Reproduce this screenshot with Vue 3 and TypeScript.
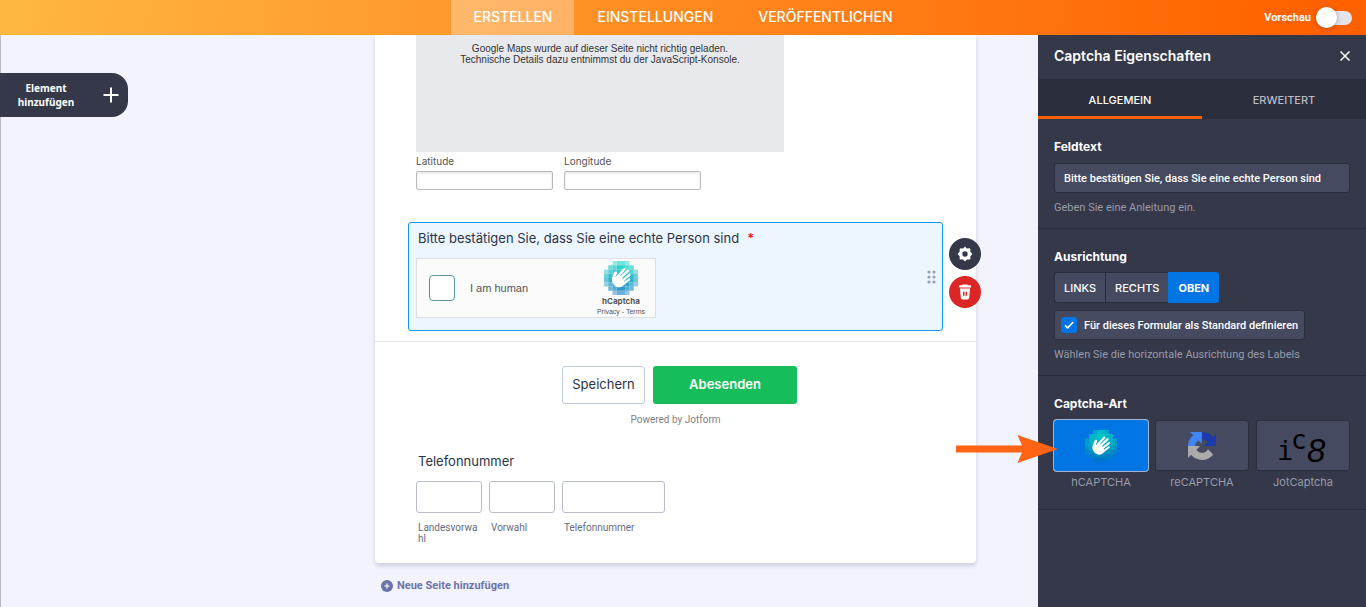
<script setup lang="ts">
import { ref } from 'vue'

const topTabs = ['ERSTELLEN', 'EINSTELLUNGEN', 'VERÖFFENTLICHEN']
const activeTop = ref('ERSTELLEN')
const panelTabs = ['ALLGEMEIN', 'ERWEITERT']
const activePanel = ref('ALLGEMEIN')
const alignments = ['LINKS', 'RECHTS', 'OBEN']
const alignment = ref('OBEN')
const captchaTypes = ['hCAPTCHA', 'reCAPTCHA', 'JotCaptcha']
const captchaType = ref('hCAPTCHA')
const fieldText = ref('Bitte bestätigen Sie, dass Sie eine echte Person sind')
const asDefault = ref(true)
const preview = ref(false)

interface Cell { x: number; y: number; fill: string; opacity: number }

const rowColors = ['#00d4bf', '#00c8bf', '#00bbbf', '#00aebf', '#00a0bf', '#0092bf', '#0083bf', '#0074bf']
const opacityRows = [
  [0, 0, 5, 7, 7, 5, 0, 0],
  [0, 7, 8, 10, 10, 8, 7, 0],
  [5, 8, 10, 10, 10, 10, 8, 5],
  [7, 10, 10, 10, 10, 10, 10, 7],
  [7, 10, 10, 10, 10, 10, 10, 7],
  [5, 8, 10, 10, 10, 10, 8, 5],
  [0, 7, 8, 10, 10, 8, 7, 0],
  [0, 0, 5, 7, 7, 5, 0, 0],
]
const cells: Cell[] = opacityRows.flatMap((row, r) =>
  row
    .map((o, c) => ({ x: c * 4, y: r * 4, fill: rowColors[r], opacity: o / 10 }))
    .filter((cell) => cell.opacity > 0),
)
const hand =
  'M10.86 14.41L11.98 11.91C12.39 11.27 12.33 10.49 11.89 10.04C11.83 9.98 11.76 9.93 11.69 9.89C11.54 9.8 11.37 9.74 11.19 9.72C11.01 9.71 10.83 9.73 10.66 9.79C10.27 9.94 9.94 10.22 9.74 10.57C9.74 10.57 8.21 14.13 7.64 15.74C7.07 17.34 7.3 20.28 9.49 22.48C11.81 24.8 15.17 25.32 17.32 23.72C17.41 23.68 17.5 23.62 17.58 23.56L24.19 18.06C24.51 17.79 24.98 17.25 24.56 16.63C24.14 16.03 23.36 16.44 23.04 16.64L19.23 19.4C19.08 19.52 18.87 19.5 18.75 19.35C18.65 19.23 18.63 18.9 18.79 18.77L24.62 13.83C25.12 13.38 25.19 12.71 24.78 12.26C24.38 11.82 23.75 11.83 23.24 12.29L18 16.38C17.79 16.55 17.49 16.5 17.34 16.29C17.24 16.17 17.2 15.98 17.31 15.86L23.25 10.1C23.71 9.67 23.74 8.94 23.31 8.45C22.86 8.02 22.17 8.03 21.69 8.47L15.63 14.16C15.48 14.3 15.2 14.16 15.16 13.99C15.15 13.93 15.17 13.86 15.22 13.82L19.87 8.54C20.33 8.11 20.36 7.36 19.94 6.87C19.49 6.43 18.77 6.45 18.34 6.9L11.3 14.69C11.05 14.94 10.68 14.95 10.5 14.8C10.6 14.7 10.77 14.55 10.86 14.41Z'
</script>

<template>
  <div class="app">
    <header class="topbar">
      <nav class="topnav">
        <button v-for="t in topTabs" :key="t" type="button" :class="['toptab', { active: t === activeTop }]" @click="activeTop = t">{{ t }}</button>
      </nav>
      <label class="preview">
        <span>Vorschau</span>
        <input v-model="preview" type="checkbox" class="switch" />
      </label>
    </header>

    <main class="workspace">
      <aside class="left">
        <button type="button" class="add-element">
          <span class="add-label">Element hinzufügen</span>
          <svg width="16" height="16" viewBox="0 0 16 16" fill="none" stroke="#fff" stroke-width="2" aria-hidden="true"><path d="M8 .5v15M.5 8h15" /></svg>
        </button>
      </aside>

      <section class="stage">
        <form class="card" @submit.prevent>
          <div class="location">
            <div class="map">Google Maps wurde auf dieser Seite nicht richtig geladen.<br />Technische Details dazu entnimmst du der JavaScript-Konsole.</div>
            <div class="coords">
              <label class="coord">Latitude<input type="text" /></label>
              <label class="coord">Longitude<input type="text" /></label>
            </div>
          </div>

          <div class="captcha-field">
            <div class="question">Bitte bestätigen Sie, dass Sie eine echte Person sind<span class="req">*</span></div>
            <div class="hcaptcha">
              <label class="human"><input type="checkbox" /><span>I am human</span></label>
              <div class="brand">
                <svg width="34" height="34" viewBox="0 0 32 32" class="soft" aria-hidden="true">
                  <rect v-for="(c, i) in cells" :key="i" :x="c.x" :y="c.y" width="4" height="4" :fill="c.fill" :opacity="c.opacity" />
                  <path :d="hand" fill="#fff" />
                </svg>
                <strong>hCaptcha</strong>
                <small><a href="#">Privacy</a> - <a href="#">Terms</a></small>
              </div>
            </div>
            <svg class="drag" width="9" height="14" viewBox="0 0 9 14" fill="#9b9fb5" aria-hidden="true">
              <circle cx="2" cy="2" r="1.6" /><circle cx="7" cy="2" r="1.6" /><circle cx="2" cy="7" r="1.6" />
              <circle cx="7" cy="7" r="1.6" /><circle cx="2" cy="12" r="1.6" /><circle cx="7" cy="12" r="1.6" />
            </svg>
            <div class="actions">
              <button type="button" class="round" aria-label="Eigenschaften">
                <svg width="16" height="16" viewBox="0 0 16 16" aria-hidden="true">
                  <path fill="#fff" fill-rule="evenodd" d="M8 .6l1.8 1.9 2.6-.3.4 0 .6 1.1-.1 2.2L15.400 8l-2.100 2.500.1 2.500-1 .6-2.600-.2L8 15.400l-1.800-2-2.600.2-1-.6.1-2.500L.6 8l2.100-2.500-.1-2.200 1-1.100 2.600.3zM8 5.300a2.700 2.700 0 1 0 0 5.400 2.700 2.700 0 0 0 0-5.400z" />
                </svg>
              </button>
              <button type="button" class="round delete" aria-label="Löschen">
                <svg width="14" height="16" viewBox="0 0 14 16" aria-hidden="true">
                  <path fill="#fff" fill-rule="evenodd" d="M4.500.5h5l.5.800h2.500q.5 0 .5.500v1.700H1V1.800q0-.5.500-.5H4zM2 4.500h10l-.8 9.300q-.2 1.700-1.700 1.700h-5q-1.500 0-1.700-1.700zM5 7.800v4h1.500v-4zm2.500 0v4H9v-4z" />
                </svg>
              </button>
            </div>
          </div>

          <div class="submit-area">
            <div class="buttons">
              <button type="button" class="save">Speichern</button>
              <button type="submit" class="send">Abesenden</button>
            </div>
            <div class="powered">Powered by Jotform</div>
          </div>

          <fieldset class="phone">
            <legend>Telefonnummer</legend>
            <div class="phone-row">
              <label class="part"><input type="text" /><span>Landesvorwahl</span></label>
              <label class="part"><input type="text" /><span>Vorwahl</span></label>
              <label class="part wide"><input type="tel" /><span>Telefonnummer</span></label>
            </div>
          </fieldset>
        </form>

        <button type="button" class="add-page">
          <svg width="12" height="12" viewBox="0 0 12 12" aria-hidden="true"><circle cx="6" cy="6" r="6" fill="#6c73a8" /><path d="M6 3.400v5.200M3.400 6h5.200" stroke="#fff" stroke-width="1.200" /></svg>
          Neue Seite hinzufügen
        </button>
      </section>

      <aside class="panel">
        <div class="panel-head">
          <h2>Captcha Eigenschaften</h2>
          <button type="button" class="close" aria-label="Schließen">
            <svg width="10" height="10" viewBox="0 0 10 10" fill="none" stroke="#fff" stroke-width="1.500" aria-hidden="true"><path d="M.5.5l9 9M9.500.5l-9 9" /></svg>
          </button>
        </div>
        <div class="panel-tabs">
          <button v-for="t in panelTabs" :key="t" type="button" :class="['panel-tab', { active: t === activePanel }]" @click="activePanel = t">{{ t }}</button>
        </div>

        <section class="group">
          <label class="group-title" for="field-text">Feldtext</label>
          <input id="field-text" v-model="fieldText" type="text" class="text-input" />
          <p class="hint">Geben Sie eine Anleitung ein.</p>
        </section>

        <section class="group">
          <h3 class="group-title">Ausrichtung</h3>
          <div class="segments">
            <button v-for="a in alignments" :key="a" type="button" :class="['segment', { active: a === alignment }]" @click="alignment = a">{{ a }}</button>
          </div>
          <label class="default-check">
            <input v-model="asDefault" type="checkbox" />
            <svg width="16" height="16" viewBox="0 0 16 16" fill="none" stroke="#fff" stroke-width="1.600" aria-hidden="true"><path d="M4 8.300l2.800 2.600L12.200 5" /></svg>
            <span>Für dieses Formular als Standard definieren</span>
          </label>
          <p class="hint">Wählen Sie die horizontale Ausrichtung des Labels</p>
        </section>

        <section class="group kinds">
          <h3 class="group-title">Captcha-Art</h3>
          <div class="tiles">
            <label v-for="k in captchaTypes" :key="k" class="kind">
              <button type="button" :aria-label="k" :class="['tile', { active: k === captchaType }]" @click="captchaType = k">
                <svg v-if="k === 'hCAPTCHA'" width="32" height="32" viewBox="0 0 32 32" aria-hidden="true">
                  <rect v-for="(c, i) in cells" :key="i" :x="c.x" :y="c.y" width="4" height="4" :fill="c.fill" :opacity="c.opacity" />
                  <path :d="hand" fill="#fff" />
                </svg>
                <svg v-else-if="k === 'reCAPTCHA'" width="28" height="28" viewBox="0 0 64 64" aria-hidden="true">
                  <path fill="#1c3aa9" d="M63.920 31.963a56 56 0 0 0-.04-1.376V4.593l-7.185 7.185C50.815 4.579 41.871 0 31.861 0 21.443 0 12.188 4.956 6.356 12.632l11.778 11.902a15.600 15.600 0 0 1 4.771-5.353c2.058-1.606 4.974-2.919 8.956-2.919.481 0 .852.056 1.125.162 4.934.389 9.210 3.112 11.729 7.064l-8.337 8.337c10.559-.041 22.488-.066 27.544.138" />
                  <path fill="#4285f4" d="M31.963.031c-.463.007-.921.018-1.375.04H4.594l7.185 7.186C4.580 13.137.001 22.080.001 32.091c0 10.418 4.956 19.673 12.632 25.505l11.902-11.778a15.600 15.600 0 0 1-5.353-4.771c-1.606-2.058-2.919-4.974-2.919-8.956 0-.481.056-.852.162-1.125.389-4.934 3.112-9.210 7.064-11.729l8.337 8.337c-.041-10.559-.066-22.488.138-27.544" />
                  <path fill="#ababab" d="M.031 31.989c.007.463.018.921.04 1.375v25.994l7.186-7.185c5.880 7.199 14.824 11.778 24.834 11.778 10.418 0 19.673-4.956 25.505-12.632L45.817 39.417a15.600 15.600 0 0 1-4.771 5.353c-2.058 1.606-4.974 2.919-8.956 2.919-.481 0-.852-.056-1.125-.162-4.934-.389-9.210-3.112-11.729-7.064l8.337-8.337C17.014 32.168 5.085 32.192.031 31.989" />
                </svg>
                <svg v-else class="jot" width="60" height="49" viewBox="0 0 60 49" aria-hidden="true">
                  <text x="4" y="39" class="glyph-i">i</text>
                  <text x="18" y="28" class="glyph-c">c</text>
                  <text x="34" y="41" class="glyph-8">8</text>
                </svg>
              </button>
              <span>{{ k }}</span>
            </label>
          </div>
          <svg class="pointer" width="104" height="30" viewBox="0 0 104 30" aria-hidden="true"><path fill="#ff6314" d="M1 11.500h66L62.500 1 103 15 62.500 29l4.500-10.500H1z" /></svg>
        </section>
      </aside>
    </main>
  </div>
</template>

<style>
body {
  margin: 0;
  background: #f3f3fe;
}
</style>

<style scoped>
.app {
  min-height: 100vh;
  display: flex;
  flex-direction: column;
  font-family: Inter, "Liberation Sans", sans-serif;
  font-size: 11px;
  color: #2c3345;
}
.app * { box-sizing: border-box; }
button, input { font-family: inherit; margin: 0; }
button { border: 0; padding: 0; background: none; cursor: pointer; color: inherit; }
a { color: inherit; text-decoration: none; }
h2, h3, p { margin: 0; }
svg { display: block; flex: none; }

.topbar {
  height: 35px;
  display: grid;
  grid-template-columns: 1fr auto 1fr;
  background: linear-gradient(95deg, #ffb742 0%, #ff6100 96%);
  color: #fff;
}
.topnav { grid-column: 2; display: flex; gap: 1px; }
.toptab { padding: 0 22px 2px; font-size: 14px; font-weight: 500; }
.toptab.active { background: rgba(255, 255, 255, 0.3); }
.preview {
  display: flex;
  align-items: center;
  justify-content: flex-end;
  gap: 5px;
  padding-right: 14px;
  font: 700 11px Roboto, sans-serif;
}
.switch {
  appearance: none;
  width: 36px;
  height: 14px;
  border-radius: 7px;
  background: #e3e3e8;
  display: flex;
  align-items: center;
}
.switch::before {
  content: "";
  width: 21px;
  height: 21px;
  flex: none;
  border-radius: 50%;
  background: #fff;
  box-shadow: 0 1px 4px rgba(60, 30, 0, 0.35);
}
.switch:checked { justify-content: flex-end; }

.workspace {
  flex: 1;
  display: grid;
  grid-template-columns: minmax(128px, 1fr) minmax(0, 601px) 62px 328px;
}
.left { border-left: 1px solid #bcbccb; padding-top: 38px; }
.add-element {
  margin-left: -1px;
  width: 128px;
  height: 44px;
  padding: 0 9px 0 8px;
  border-radius: 0 16px 16px 0;
  background: #343849;
  color: #fff;
  display: flex;
  align-items: center;
  justify-content: space-between;
  font-size: 10px;
  line-height: 14px;
  font-weight: 700;
  font-family: "Noto Sans", sans-serif;
}
.add-label { width: 76px; }

.card {
  background: #fff;
  border-radius: 0 0 4px 4px;
  box-shadow: 0 3px 4px rgba(60, 70, 120, 0.2);
  padding-bottom: 19px;
}
.location { padding: 0 41px; }
.map {
  width: 368px;
  height: 117px;
  padding-top: 8px;
  background: #e8e9ed;
  text-align: center;
  color: #333;
  font: 10px/11px "Liberation Sans", Arial, sans-serif;
}
.coords { display: flex; gap: 11px; }
.coord { width: 137px; font-size: 10px; line-height: 19px; color: #555; }
.coord input {
  display: block;
  width: 100%;
  height: 19px;
  border: 1px solid #bbb;
  border-radius: 2px;
  box-shadow: inset 0 1px 3px rgba(0, 0, 0, 0.12);
}

.captcha-field {
  position: relative;
  margin: 32px 33px 10px;
  height: 109px;
  padding: 6px 7px 0;
  border: 1px solid #0f98f5;
  border-radius: 3px;
  background: #edf5ff;
}
.question { padding-left: 2px; font-size: 13px; line-height: 18px; }
.req { margin-left: 8px; color: #e3171b; font-weight: 600; }
.hcaptcha {
  margin-top: 11px;
  width: 240px;
  height: 60px;
  padding: 0 10px 0 12px;
  display: flex;
  justify-content: space-between;
  border: 1px solid #e0e0e0;
  background: #fafafa;
  color: #555;
}
.human { display: flex; align-items: center; gap: 15px; font: 11px "Liberation Sans", sans-serif; }
.human input {
  appearance: none;
  width: 26px;
  height: 26px;
  border: 1px solid #5b98a3;
  border-radius: 4px;
  background: #fff;
}
.brand { display: flex; flex-direction: column; align-items: center; padding-top: 2px; }
.brand strong { font-size: 8px; line-height: 12px; font-weight: 700; }
.brand small { font: 7px/10px "Liberation Sans", sans-serif; }
.soft { opacity: 0.8; }
.drag { position: absolute; right: 6px; top: 47px; }
.actions {
  position: absolute;
  right: -39px;
  top: 15px;
  display: flex;
  flex-direction: column;
  gap: 6px;
}
.round {
  width: 32px;
  height: 32px;
  border-radius: 50%;
  background: #343849;
  display: grid;
  place-items: center;
}
.delete { background: #dc2626; }

.submit-area { border-top: 1px solid #e3e5f0; padding-top: 24px; text-align: center; }
.buttons { display: flex; justify-content: center; gap: 8px; padding-left: 8px; }
.save, .send { height: 38px; padding-bottom: 2px; border-radius: 3px; font-size: 13px; }
.save { width: 83px; border: 1px solid #c3cade; }
.send { width: 144px; background: #18bd5b; color: #fff; font-weight: 600; }
.powered { margin-top: 8px; font: 10px/16px Roboto, sans-serif; color: #808080; }

.phone { margin: 24px 41px 0; padding: 0; border: 0; min-width: 0; }
.phone legend { padding: 0 0 0 2px; font-size: 13px; line-height: 18px; }
.phone-row { display: flex; gap: 7px; padding-top: 11px; }
.part { width: 66px; }
.part.wide { width: 103px; }
.part input {
  display: block;
  width: 100%;
  height: 32px;
  border: 1px solid #b8bdc9;
  border-radius: 3px;
  background: #fff;
}
.part span {
  display: block;
  padding: 9px 2px 0;
  font: 10px/11px Roboto, sans-serif;
  color: #686c7c;
  overflow-wrap: anywhere;
}
.add-page {
  margin: 15px 0 0 6px;
  display: flex;
  align-items: center;
  gap: 4px;
  color: #6c73a8;
  font: 700 11px/16px Roboto, sans-serif;
}

.panel { grid-column: 4; background: #343849; color: #fff; }
.panel-head {
  height: 44px;
  padding: 0 16px 2px;
  display: flex;
  align-items: center;
  justify-content: space-between;
}
.panel-head h2 { font-size: 14px; line-height: 20px; font-weight: 600; }
.panel-tabs { display: flex; height: 40px; background: #2b2e3c; }
.panel-tab {
  flex: 1;
  padding-top: 2px;
  border-top: 3px solid transparent;
  border-bottom: 3px solid transparent;
  font-size: 11px;
  font-weight: 500;
  color: #b9bbc5;
}
.panel-tab.active { color: #fff; border-bottom-color: #ff6100; }
.group {
  position: relative;
  display: flex;
  flex-direction: column;
  align-items: flex-start;
  padding: 20px 16px 12px;
  border-bottom: 1px solid #2a2d3c;
}
.group-title { margin-bottom: 7px; font-size: 12px; line-height: 16px; font-weight: 700; }
.text-input {
  width: 100%;
  height: 30px;
  margin-top: 1px;
  padding: 0 9px;
  border: 1px solid #2b2e3c;
  border-radius: 3px;
  background: #454a60;
  color: #fff;
  font: 500 11px Roboto, sans-serif;
}
.hint { padding-top: 7px; font: 11px/16px Roboto, sans-serif; color: #989bab; }
.segments { display: flex; height: 31px; margin-bottom: 7px; }
.segment {
  padding: 0 9px;
  border: 1px solid #2b2e3c;
  border-right-width: 0;
  background: #454a60;
  font-size: 11px;
  font-weight: 500;
}
.segment:first-child { border-radius: 3px 0 0 3px; }
.segment.active { padding: 0 10px; background: #0075e3; border: 0; border-radius: 0 3px 3px 0; font-weight: 700; }
.default-check {
  position: relative;
  display: flex;
  align-items: center;
  gap: 7px;
  height: 30px;
  padding: 0 6px;
  border: 1px solid #2b2e3c;
  border-radius: 3px;
  background: #454a60;
  font: 500 11px Roboto, sans-serif;
}
.default-check input { appearance: none; width: 16px; height: 16px; border-radius: 3px; background: #596078; }
.default-check input:checked { background: #0075e3; }
.default-check svg { position: absolute; left: 6px; }
.kinds { padding-bottom: 19px; }
.tiles { width: 100%; display: grid; grid-template-columns: repeat(3, 1fr); gap: 7px; padding-top: 1px; }
.kind { display: flex; flex-direction: column; text-align: center; gap: 3px; line-height: 16px; color: #989bab; }
.tile {
  height: 51px;
  display: grid;
  place-items: center;
  border: 1px solid #2b2e3c;
  border-radius: 3px;
  background: #454a60;
}
.tile.active { background: #0075e3; border-color: #0075e3; box-shadow: 0 0 0 1px #a3b4d0; }
.jot { fill: #000; }
.glyph-i { font: 27px "DejaVu Sans Mono", monospace; }
.glyph-c { font: 26px "DejaVu Sans Mono", monospace; }
.glyph-8 { font: italic 33px "Liberation Sans", sans-serif; }
.pointer { position: absolute; left: -83px; top: 58px; }
</style>
